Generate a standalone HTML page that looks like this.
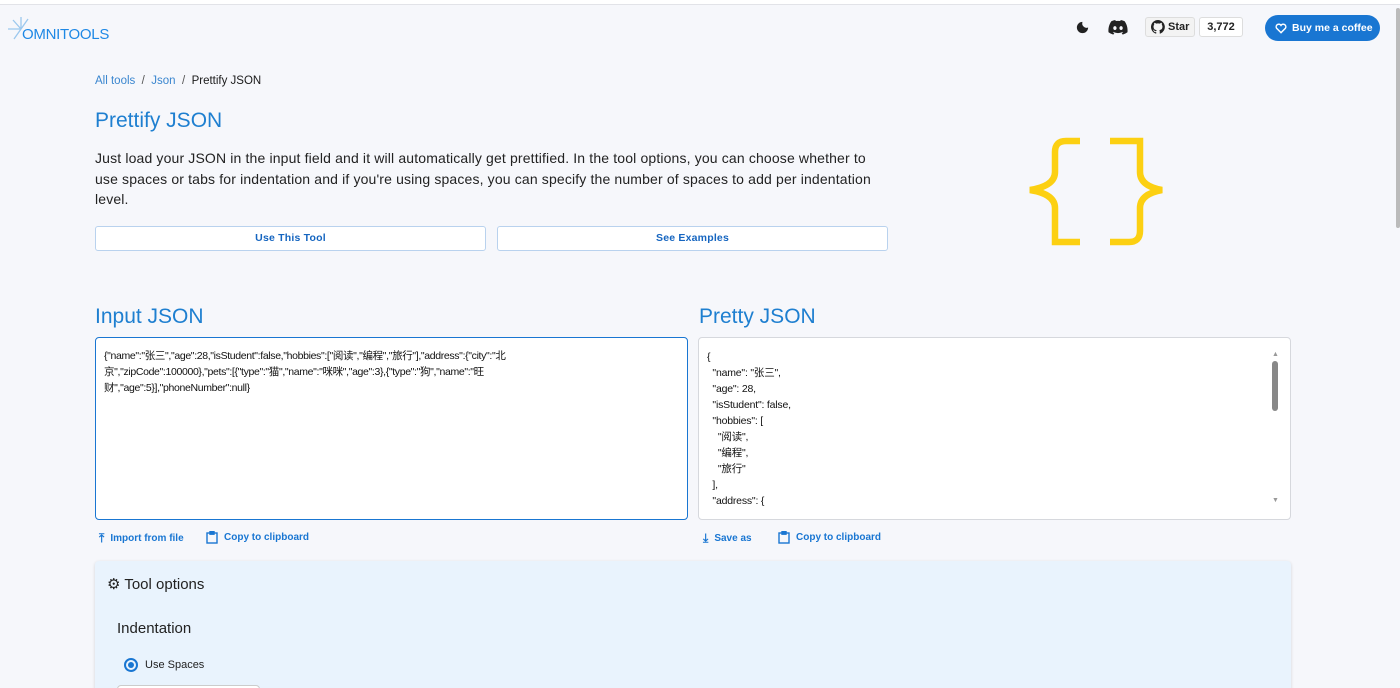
<!DOCTYPE html>
<html><head><meta charset="utf-8"><style>
*{box-sizing:border-box;margin:0;padding:0}
html,body{width:1400px;height:688px;overflow:hidden}
body{background:#f6f7fb;font-family:"Liberation Sans","Noto Sans CJK SC",sans-serif;position:relative;color:#1a1a1a}
.top{position:absolute;left:0;top:0;width:1400px;height:5px;background:#fff;border-bottom:1px solid #e2e3e8}
.abs{position:absolute}
.blue{color:#1976d2}
.btn{position:absolute;height:25px;border:1px solid #b9d2ee;background:#fff;border-radius:3px;font-size:10.5px;color:#1565c0;text-align:center;line-height:23px;font-weight:bold;letter-spacing:0.2px}
.box{position:absolute;background:#fff;border-radius:4px}
.tx{font-size:11px;line-height:16px;color:#111}
.act{position:absolute;font-size:10px;color:#1976d2;font-weight:bold;display:flex;align-items:center;gap:6px}
</style></head><body>
<div class="top"></div>
<div class="abs" style="left:7px;top:14px"><svg width="26" height="26" viewBox="0 0 26 26" stroke="#9bc8ee" stroke-width="1.3"><path d="M14 15V3M14 15L6 6M14 15H1M14 15L7 25M14 15L21 5"/></svg></div>
<div class="abs" style="left:22px;top:26px;font-size:15px;color:#1e88e5;letter-spacing:-0.3px">OMNITOOLS</div>
<svg class="abs" style="left:1075px;top:20px" width="15" height="15" viewBox="0 0 24 24"><path fill="#222" d="M12 3a9 9 0 1 0 9 9 7 7 0 0 1-9-9z"/></svg>
<svg class="abs" style="left:1108px;top:20px" width="20" height="15" viewBox="0 0 24 18"><path fill="#222" d="M20 1.5A19 19 0 0 0 15.3 0l-.6 1.2a18 18 0 0 0-5.4 0L8.7 0A19 19 0 0 0 4 1.5C1 6 .2 10.4.6 14.7A19 19 0 0 0 6.4 17.6l1.2-2a12 12 0 0 1-1.9-.9l.5-.4a13.5 13.5 0 0 0 11.6 0l.5.4-1.9.9 1.2 2a19 19 0 0 0 5.8-2.9c.5-5-.8-9.4-3.4-13.2zM8.3 12c-1.1 0-2-1-2-2.3s.9-2.3 2-2.3 2 1 2 2.3-.9 2.3-2 2.3zm7.4 0c-1.1 0-2-1-2-2.3s.9-2.3 2-2.3 2 1 2 2.3-.9 2.3-2 2.3z"/></svg>
<div class="abs" style="left:1145px;top:17px;width:50px;height:20px;border:1px solid #ddd;border-radius:3px;background:#f3f3f3;font-size:11px;font-weight:bold;line-height:18px;padding-left:22px;color:#222">Star</div>
<svg class="abs" style="left:1151px;top:20px" width="14" height="14" viewBox="0 0 16 16"><path fill="#222" d="M8 0a8 8 0 0 0-2.5 15.6c.4 0 .5-.2.5-.4v-1.4c-2.2.5-2.7-1-2.7-1-.4-.9-.9-1.2-.9-1.2-.7-.5.1-.5.1-.5.8.1 1.2.8 1.2.8.7 1.3 1.9.9 2.3.7.1-.5.3-.9.5-1.1-1.8-.2-3.6-.9-3.6-4 0-.9.3-1.6.8-2.1-.1-.2-.4-1 .1-2.1 0 0 .7-.2 2.2.8a7.5 7.5 0 0 1 4 0c1.5-1 2.2-.8 2.2-.8.4 1.1.2 1.9.1 2.1.5.6.8 1.3.8 2.1 0 3.1-1.9 3.7-3.6 3.9.3.3.5.8.5 1.5v2.2c0 .2.1.5.6.4A8 8 0 0 0 8 0z"/></svg>
<div class="abs" style="left:1199px;top:17px;width:44px;height:20px;border:1px solid #ddd;border-radius:3px;background:#fff;font-size:11px;font-weight:bold;line-height:18px;text-align:center;color:#222">3,772</div>
<div class="abs" style="left:1265px;top:15px;width:115px;height:26px;border-radius:13px;background:#1976d2;color:#fff;font-size:10.5px;font-weight:bold;line-height:26px;padding-left:27px">Buy me a coffee</div>
<svg class="abs" style="left:1274px;top:21px" width="14" height="14" viewBox="0 0 24 24"><path fill="none" stroke="#fff" stroke-width="2.5" d="M12 20l-7.5-7.5a4.5 4.5 0 0 1 7.5-5 4.5 4.5 0 0 1 7.5 5z"/></svg>
<div class="abs" style="left:95px;top:75px;font-size:11.5px"><span style="color:#3a86cf">All tools</span> <span style="color:#555">&nbsp;/&nbsp;</span> <span style="color:#3a86cf">Json</span> <span style="color:#555">&nbsp;/&nbsp;</span> Prettify JSON</div>
<div class="abs" style="left:95px;top:109px;font-size:21px;color:#1e7fd0">Prettify JSON</div>
<div class="abs" style="left:95px;top:148px;width:795px;font-size:14px;letter-spacing:0.15px;line-height:20.5px;color:#222">Just load your JSON in the input field and it will automatically get prettified. In the tool options, you can choose whether to use spaces or tabs for indentation and if you're using spaces, you can specify the number of spaces to add per indentation level.</div>
<div class="btn" style="left:95px;top:226px;width:391px">Use This Tool</div>
<div class="btn" style="left:497px;top:226px;width:391px">See Examples</div>
<svg class="abs" style="left:1020px;top:135px" width="150" height="115" viewBox="1020 135 150 115" fill="none" stroke="#fcd012" stroke-width="6.5"><path d="M1080 141H1066Q1055 141 1055 152V172Q1055 186 1030 190Q1055 194 1055 208V242H1080"/><path d="M1110 141H1140V172Q1140 186 1162 190Q1140 194 1140 208V231Q1140 242 1129 242H1110"/></svg>
<div class="abs" style="left:95px;top:305px;font-size:21px;color:#1e7fd0">Input JSON</div>
<div class="abs" style="left:699px;top:305px;font-size:21px;color:#1e7fd0">Pretty JSON</div>
<div class="box" style="left:95px;top:337px;width:593px;height:183px;border:1.5px solid #1976d2;padding:10px 8px">
<div class="tx" style="font-size:10.5px;letter-spacing:-0.35px">{"name":"张三","age":28,"isStudent":false,"hobbies":["阅读","编程","旅行"],"address":{"city":"北<br>京","zipCode":100000},"pets":[{"type":"猫","name":"咪咪","age":3},{"type":"狗","name":"旺<br>财","age":5}],"phoneNumber":null}</div></div>
<div class="box" style="left:698px;top:337px;width:593px;height:183px;border:1px solid #d6d8dd;padding:11px 8px;overflow:hidden">
<div class="tx" style="font-size:10.5px;letter-spacing:-0.2px;white-space:pre">{
  "name": "张三",
  "age": 28,
  "isStudent": false,
  "hobbies": [
    "阅读",
    "编程",
    "旅行"
  ],
  "address": {</div></div>
<div class="abs" style="left:1272px;top:361px;width:6px;height:50px;background:#888;border-radius:3px"></div>
<div class="abs" style="left:1272px;top:351px;font-size:7px;color:#999">▲</div>
<div class="abs" style="left:1272px;top:497px;font-size:7px;color:#999">▼</div>
<div class="act" style="left:99px;top:531px"><span style="font-size:12px">⤒</span> Import from file</div>
<div class="act" style="left:206px;top:531px"><svg width="12" height="13" viewBox="0 0 12 13" fill="none" stroke="#1976d2" stroke-width="1.4"><rect x="1" y="2" width="10" height="10"/><rect x="4" y="0.7" width="4" height="2.5" fill="#1976d2"/></svg> Copy to clipboard</div>
<div class="act" style="left:703px;top:531px"><span style="font-size:12px">⤓</span> Save as</div>
<div class="act" style="left:778px;top:531px"><svg width="12" height="13" viewBox="0 0 12 13" fill="none" stroke="#1976d2" stroke-width="1.4"><rect x="1" y="2" width="10" height="10"/><rect x="4" y="0.7" width="4" height="2.5" fill="#1976d2"/></svg> Copy to clipboard</div>
<div class="abs" style="left:95px;top:561px;width:1196px;height:140px;background:#e9f3fd;border-radius:4px;box-shadow:0 1px 3px rgba(0,0,0,.15)"></div>
<div class="abs" style="left:107px;top:575px;font-size:15px;color:#222">⚙ Tool options</div>
<div class="abs" style="left:117px;top:620px;font-size:15px;color:#222">Indentation</div>
<div class="abs" style="left:124px;top:658px;width:14px;height:14px;border:2px solid #1976d2;border-radius:50%"><div style="margin:2px;width:6px;height:6px;border-radius:50%;background:#1976d2"></div></div>
<div class="abs" style="left:145px;top:659px;font-size:11px;color:#222">Use Spaces</div>
<div class="abs" style="left:117px;top:685px;width:143px;height:10px;border:1px solid #ccc;border-radius:4px;background:#fff"></div>
<div class="abs" style="left:1396px;top:8px;width:4px;height:220px;background:#bbb;border-radius:2px"></div>
</body></html>
